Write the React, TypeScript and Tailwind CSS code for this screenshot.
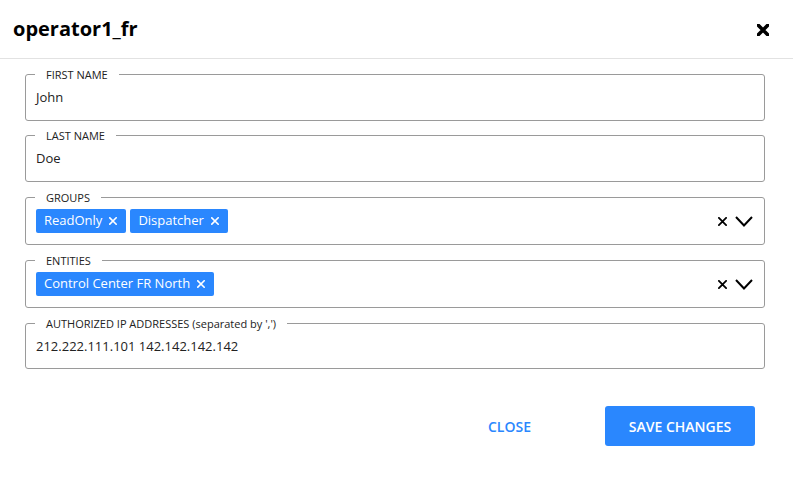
import type { ReactNode } from 'react'

const font = { fontFamily: '"Open Sans", "Noto Sans", sans-serif' }

function XIcon({ size = 10, stroke = 2 }: { size?: number; stroke?: number }) {
  return (
    <svg width={size} height={size} viewBox="0 0 10 10" fill="none">
      <path d="M1 1 L9 9 M9 1 L1 9" stroke="currentColor" strokeWidth={stroke} strokeLinecap="square" />
    </svg>
  )
}

function Field({ label, children, className = '' }: { label: string; children: ReactNode; className?: string }) {
  return (
    <fieldset className={`border border-[#9a9a9a] rounded-[3px] pl-[10px] pr-[12px] ${className}`}>
      <legend className="px-[11px] -ml-px text-[11px] leading-[15px] text-[#222]">{label}</legend>
      {children}
    </fieldset>
  )
}

function Chip({ text }: { text: string }) {
  return (
    <span className="h-6 bg-[#2a87fe] text-white text-[13px] rounded-[2px] pl-2 pr-[9px] flex items-center gap-[7px]">
      {text}
      <XIcon size={8} stroke={2} />
    </span>
  )
}

function MultiSelect({ values }: { values: string[] }) {
  return (
    <div className="flex items-center">
      <div className="flex flex-1 gap-1">
        {values.map((v) => (
          <Chip key={v} text={v} />
        ))}
      </div>
      <div className="flex items-center gap-[8px] text-black -mr-px">
        <XIcon size={9} stroke={2} />
        <svg width="18" height="12" viewBox="0 0 18 12" fill="none">
          <path d="M1 2 L9 10.5 L17 2" stroke="currentColor" strokeWidth="2" />
        </svg>
      </div>
    </div>
  )
}

export default function App() {
  return (
    <div className="w-[793px] h-[482px] bg-white" style={font}>
      {/* header */}
      <div className="h-[59px] border-b border-[#e2e2e2] flex items-center justify-between pl-[13px] pr-[24px]">
        <h1 className="text-[20px] font-bold text-black">operator1_fr</h1>
        <span className="text-black mt-[1px]">
          <XIcon size={12} stroke={3} />
        </span>
      </div>

      {/* form */}
      <div className="pl-[25px] pr-[28px] pt-[8px] flex flex-col gap-[7px]">
        <Field label="FIRST NAME" className="pt-[5px] pb-[13px]">
          <div className="text-[13px] leading-5 text-[#222]">John</div>
        </Field>
        <Field label="LAST NAME" className="pt-[5px] pb-[13px]">
          <div className="text-[13px] leading-5 text-[#222]">Doe</div>
        </Field>
        <Field label="GROUPS" className="mt-px pt-[4px] pb-[11px]">
          <MultiSelect values={['ReadOnly', 'Dispatcher']} />
        </Field>
        <Field label="ENTITIES" className="mt-px pt-[4px] pb-[11px]">
          <MultiSelect values={['Control Center FR North']} />
        </Field>
        <Field label="AUTHORIZED IP ADDRESSES (separated by ',')" className="mt-px pt-[5px] pb-[12px]">
          <div className="text-[13px] leading-5 text-[#222]">212.222.111.101 142.142.142.142</div>
        </Field>
      </div>

      {/* footer */}
      <div className="flex justify-end items-center pr-[38px] mt-[37px] gap-[62px]">
        <button className="text-[14px] font-semibold text-[#2a87fe] px-3 h-10">CLOSE</button>
        <button className="w-[150px] h-10 bg-[#2a87fe] text-white text-[14px] font-semibold rounded-[3px]">
          SAVE CHANGES
        </button>
      </div>
    </div>
  )
}
